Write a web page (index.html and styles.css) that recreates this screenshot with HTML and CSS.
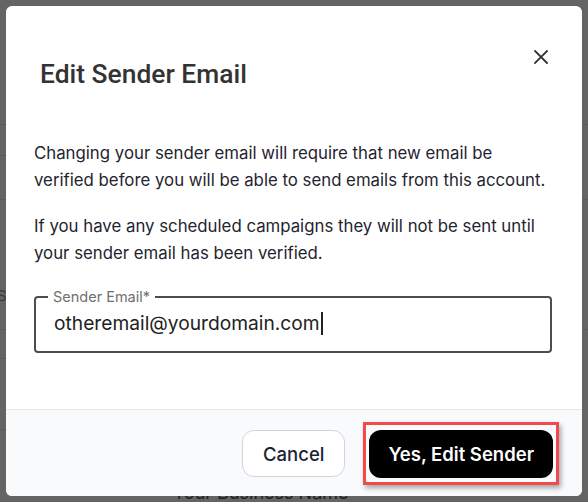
FILE: index.html
```html
<!DOCTYPE html>
<html lang="en">
<head>
<meta charset="utf-8">
<title>Edit Sender Email</title>
<link rel="stylesheet" href="styles.css">
</head>
<body>
  <div class="page">
    <div class="col col-left">
      <div class="line h125"></div>
      <div class="line h31"></div>
      <div class="line h44"></div>
      <div class="line h130"><span class="field-name">Sender</span></div>
      <div class="line h29"></div>
      <div class="line h71"></div>
    </div>
    <div class="col col-right">
      <div class="line h125"></div>
      <div class="line h75"></div>
      <div class="line h130"></div>
    </div>
    <div class="caption">Your Business Name</div>
  </div>

  <div class="modal" role="dialog" aria-labelledby="dlg-title">
    <header class="modal-head">
      <h2 id="dlg-title" class="title">Edit Sender Email</h2>
      <button class="close" aria-label="Close">
        <svg width="14" height="14" viewBox="0 0 14 14" fill="none" stroke="#333" stroke-width="1.8" stroke-linecap="square">
          <path d="M1 1 L13 13 M13 1 L1 13"/>
        </svg>
      </button>
    </header>

    <div class="modal-body">
      <p>Changing your sender email will require that new email be verified before you will be able to send emails from this account.</p>
      <p>If you have any scheduled campaigns they will not be sent until your sender email has been verified.</p>

      <fieldset class="field">
        <legend>Sender Email*</legend>
        <div class="field-value">otheremail@yourdomain.com<span class="caret"></span></div>
      </fieldset>
    </div>

    <footer class="modal-foot">
      <button class="btn btn-secondary">Cancel</button>
      <button class="btn btn-primary">Yes, Edit Sender</button>
    </footer>
  </div>
</body>
</html>
```
FILE: styles.css
```css
* {
  box-sizing: border-box;
  margin: 0;
  padding: 0;
}

html, body {
  height: 100%;
}

body {
  position: relative;
  overflow: hidden;
  background: #646464;
  font-family: Inter, "Noto Sans", sans-serif;
}

/* dimmed page behind the dialog */
.page {
  display: grid;
  grid-template-columns: 300px 1fr;
}

.col {
  display: flex;
  flex-direction: column;
}

.line {
  border-bottom: 1px solid #5a5a5a;
}

.h125 { height: 125px; }
.h31 { height: 31px; }
.h44 { height: 44px; }
.h130 { height: 130px; }
.h29 { height: 29px; }
.h71 { height: 71px; }
.h75 { height: 75px; }

.field-name {
  display: block;
  margin: 87px 0 0 -3px;
  font-size: 15px;
  line-height: 18px;
  color: #3a3a3a;
}

.caption {
  grid-column: 1 / -1;
  padding: 52px 0 0 173px;
  font-size: 18px;
  line-height: 22px;
  color: #1f1f1f;
}

/* dialog */
.modal {
  position: absolute;
  left: 6px;
  top: 6px;
  width: 576px;
  height: 490px;
  background: #fff;
  border-radius: 6px;
  overflow: hidden;
  display: flex;
  flex-direction: column;
}

.modal-head {
  position: relative;
  padding: 52px 34px 0;
}

.title {
  font-family: Roboto, "Liberation Sans", sans-serif;
  font-weight: 500;
  font-size: 26.4px;
  line-height: 32px;
  color: #333;
}

.close {
  position: absolute;
  top: 44px;
  right: 34px;
  width: 14px;
  height: 14px;
  border: 0;
  background: none;
  display: flex;
}

.modal-body {
  padding: 50px 32px 0 28px;
  color: #1f2430;
  font-size: 16.8px;
  line-height: 27px;
}

.modal-body p + p {
  margin-top: 19px;
}

.field {
  margin-top: 22px;
  width: 518px;
  height: 64px;
  border: 2px solid #4d4d4d;
  border-radius: 4px;
  padding: 6px 16px 0 18px;
}

.field legend {
  margin-left: -6px;
  padding: 0 5px;
  font-size: 14.5px;
  line-height: 16px;
  color: #707070;
}

.field-value {
  display: flex;
  align-items: center;
  font-size: 19.2px;
  line-height: 24px;
  color: #222;
}

.caret {
  display: inline-block;
  width: 2px;
  height: 23px;
  margin-left: 1px;
  background: #222;
}

.modal-foot {
  margin-top: auto;
  height: 87px;
  border-top: 1px solid #e5e7eb;
  background: #f9fafb;
  padding: 20px 29px 0;
  display: flex;
  justify-content: flex-end;
  align-items: flex-start;
  gap: 24px;
}

.btn {
  font-family: Inter, "Noto Sans", sans-serif;
  font-size: 18.5px;
  border-radius: 12px;
  cursor: pointer;
}

.btn-secondary {
  height: 47px;
  padding: 0 20px;
  background: #fff;
  border: 1px solid #d0d5dd;
  color: #1d2433;
  font-weight: 500;
}

.btn-primary {
  position: relative;
  height: 48px;
  padding: 0 19px;
  background: #000;
  border: 0;
  color: #fff;
  font-weight: 600;
}

/* highlight frame drawn around the confirm button */
.btn-primary::after {
  content: "";
  position: absolute;
  top: -8px;
  bottom: -7px;
  left: -6px;
  right: -6px;
  border: 3px solid #f04a4a;
  box-shadow: 2px 3px 5px rgba(0, 0, 0, 0.35);
}
```
